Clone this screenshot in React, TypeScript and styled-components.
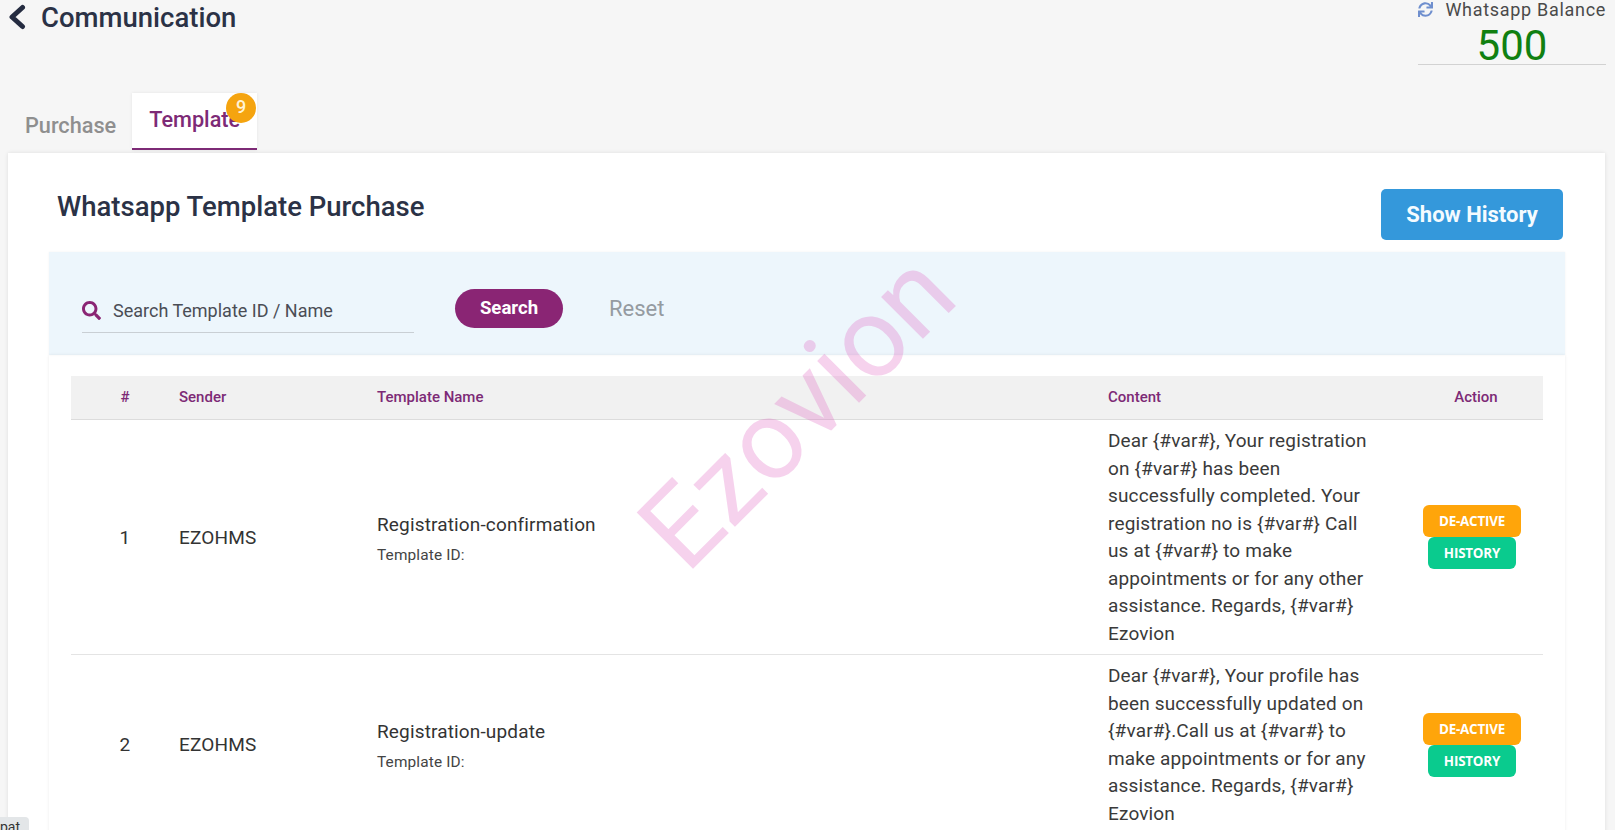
import styled, { createGlobalStyle } from "styled-components";
import { FaSearch, FaSync } from "react-icons/fa";

const GlobalStyle = createGlobalStyle`
  html, body {
    margin: 0;
    height: 100%;
    overflow: hidden;
    background: #f6f6f6;
    font-family: Roboto, "Liberation Sans", sans-serif;
    color: #2f3136;
  }
`;

const Page = styled.div`
  position: relative;
  height: 830px;
  overflow: hidden;
`;

const TopBar = styled.header`
  display: flex;
  justify-content: space-between;
  align-items: flex-start;
  height: 93px;
`;

const BackTitle = styled.div`
  display: flex;
  align-items: center;
  gap: 15px;
  padding: 1px 0 0 8px;
  height: 32px;
  color: #252c41;
  svg {
    width: 18px;
    height: 26px;
  }
`;

const PageTitle = styled.h1`
  margin: 0;
  font-size: 27.5px;
  font-weight: 500;
  color: #2b3246;
`;

const Balance = styled.div`
  width: 188px;
  margin-right: 9px;
  height: 64px;
  border-bottom: 1px solid #d2d2d2;
  text-align: center;
`;

const BalanceLabel = styled.div`
  display: flex;
  align-items: center;
  justify-content: flex-end;
  gap: 12px;
  height: 19px;
  font-size: 18px;
  letter-spacing: 0.7px;
  color: #4a4a4a;
  svg {
    width: 15px;
    height: 15px;
    color: #6f8fce;
  }
`;

const BalanceValue = styled.div`
  padding-top: 4px;
  font-size: 42px;
  line-height: 46px;
  color: #118011;
`;

const Tabs = styled.nav`
  display: flex;
  height: 57px;
  padding-left: 9px;
`;

const Tab = styled.div<{ $active?: boolean }>`
  position: relative;
  box-sizing: border-box;
  padding: ${({ $active }) => ($active ? "14px 17px 0" : "20px 16px 0")};
  font-size: 21.7px;
  line-height: 26px;
  font-weight: 500;
  color: ${({ $active }) => ($active ? "#7d2a76" : "#8f8f8f")};
  background: ${({ $active }) => ($active ? "#fff" : "transparent")};
  border-bottom: ${({ $active }) => ($active ? "2px solid #7d2a76" : "none")};
  box-shadow: ${({ $active }) => ($active ? "0 0 3px rgba(0, 0, 0, 0.08)" : "none")};
`;

const TabBadge = styled.span`
  position: absolute;
  top: 0;
  right: 1px;
  width: 30px;
  height: 30px;
  border-radius: 50%;
  background: #f5a40f;
  color: #fff3d6;
  font-size: 18px;
  font-weight: 500;
  line-height: 28px;
  text-align: center;
`;

const Card = styled.main`
  margin: 3px 10px 0 8px;
  padding: 36px 40px 0 41px;
  height: 700px;
  background: #fff;
  box-shadow: 0 0 4px rgba(0, 0, 0, 0.1);
`;

const CardHead = styled.div`
  display: flex;
  justify-content: space-between;
  align-items: flex-start;
  height: 63px;
  padding-right: 2px;
`;

const CardTitle = styled.h2`
  margin: 0;
  padding: 1px 0 0 8px;
  font-size: 27.5px;
  line-height: 34px;
  font-weight: 500;
  color: #2b3246;
`;

const HistoryButton = styled.button`
  width: 182px;
  height: 51px;
  border: 0;
  border-radius: 5px;
  background: #3498db;
  color: #f4fbff;
  font: 700 22px Roboto, sans-serif;
`;

const SearchPanel = styled.section`
  display: flex;
  align-items: flex-start;
  box-sizing: border-box;
  height: 103px;
  padding: 37px 0 0 33px;
  background: #edf6fc;
  box-shadow: 0 0 2px rgba(0, 0, 0, 0.06);
`;

const SearchField = styled.div`
  display: flex;
  align-items: center;
  gap: 12px;
  width: 332px;
  height: 43px;
  border-bottom: 1px solid #c9cfd4;
  color: #8a2574;
  svg {
    width: 19px;
    height: 19px;
  }
`;

const SearchText = styled.span`
  font-size: 18px;
  color: #4a4d55;
`;

const SearchButton = styled.button`
  width: 108px;
  height: 39px;
  margin-left: 41px;
  padding-bottom: 3px;
  border: 0;
  border-radius: 20px;
  background: #8a2574;
  color: #fff;
  font: 700 18.6px Roboto, sans-serif;
`;

const ResetLink = styled.span`
  margin-left: 46px;
  font-size: 22px;
  line-height: 40px;
  color: #959ba1;
`;

const TablePanel = styled.section`
  padding: 21px 22px 0;
  box-shadow: 0 0 3px rgba(0, 0, 0, 0.08);
  height: 500px;
`;

const DataTable = styled.table`
  width: 1472px;
  table-layout: fixed;
  border-collapse: collapse;
`;

const HeadCell = styled.th<{ $center?: boolean; $width: number }>`
  width: ${({ $width }) => $width}px;
  height: 41px;
  padding: 0 0 2px;
  background: #f1f1f1;
  border-bottom: 1px solid #dcdcdc;
  font-size: 15px;
  font-weight: 500;
  color: #7d2a76;
  text-align: ${({ $center }) => ($center ? "center" : "left")};
`;

const Row = styled.tr`
  border-bottom: 1px solid #e4e4e4;
`;

const Cell = styled.td<{ $center?: boolean }>`
  padding: 7px 0;
  font-size: 19px;
  letter-spacing: 0.15px;
  color: #333;
  vertical-align: middle;
  text-align: ${({ $center }) => ($center ? "center" : "left")};
`;

const TemplateName = styled.div`
  margin-bottom: 8px;
  line-height: 27px;
`;

const TemplateId = styled.div`
  font-size: 15.4px;
  color: #444;
`;

const ContentText = styled.div`
  width: 265px;
  line-height: 27.5px;
  color: #3a3a3a;
`;

const ActionStack = styled.div`
  display: flex;
  flex-direction: column;
  align-items: center;
  padding-right: 8px;
`;

const ActionButton = styled.button<{ $color: string; $width: number }>`
  width: ${({ $width }) => $width}px;
  height: 32px;
  border: 0;
  border-radius: 6px;
  background: ${({ $color }) => $color};
  color: #fff;
  font: 700 13.4px "Open Sans", sans-serif;
  letter-spacing: -0.2px;
`;

const Watermark = styled.div`
  position: absolute;
  left: 797px;
  top: 411px;
  transform: translate(-50%, -50%) rotate(-45deg);
  font-size: 112px;
  font-weight: 400;
  line-height: 1;
  color: #e060c0;
  opacity: 0.28;
  pointer-events: none;
  white-space: nowrap;
`;

const CornerTip = styled.div`
  position: absolute;
  left: 0;
  bottom: 0;
  width: 29px;
  height: 13px;
  overflow: hidden;
  border-radius: 0 4px 0 0;
  background: #e3e6e8;
  font-size: 14px;
  line-height: 20px;
  color: #333;
`;

const rows = [
  {
    id: 1,
    name: "Registration-confirmation",
    content:
      "Dear {#var#}, Your registration on {#var#} has been successfully completed. Your registration no is {#var#} Call us at {#var#} to make appointments or for any other assistance. Regards, {#var#} Ezovion",
  },
  {
    id: 2,
    name: "Registration-update",
    content:
      "Dear {#var#}, Your profile has been successfully updated on {#var#}.Call us at {#var#} to make appointments or for any assistance. Regards, {#var#} Ezovion",
  },
];

export default function App() {
  return (
    <Page>
      <GlobalStyle />
      <TopBar>
        <BackTitle>
          <svg viewBox="0 0 18 26" fill="none" stroke="currentColor" strokeWidth="5" strokeLinecap="round" strokeLinejoin="round">
            <polyline points="14.5,3.5 4,13 14.5,22.5" />
          </svg>
          <PageTitle>Communication</PageTitle>
        </BackTitle>
        <Balance>
          <BalanceLabel>
            <FaSync />
            Whatsapp Balance
          </BalanceLabel>
          <BalanceValue>500</BalanceValue>
        </Balance>
      </TopBar>
      <Tabs>
        <Tab>Purchase</Tab>
        <Tab $active>
          Template
          <TabBadge>9</TabBadge>
        </Tab>
      </Tabs>
      <Card>
        <CardHead>
          <CardTitle>Whatsapp Template Purchase</CardTitle>
          <HistoryButton>Show History</HistoryButton>
        </CardHead>
        <SearchPanel>
          <SearchField>
            <FaSearch />
            <SearchText>Search Template ID / Name</SearchText>
          </SearchField>
          <SearchButton>Search</SearchButton>
          <ResetLink>Reset</ResetLink>
        </SearchPanel>
        <TablePanel>
          <DataTable>
            <thead>
              <tr>
                <HeadCell $center $width={108}>#</HeadCell>
                <HeadCell $width={198}>Sender</HeadCell>
                <HeadCell $width={731}>Template Name</HeadCell>
                <HeadCell $width={301}>Content</HeadCell>
                <HeadCell $center $width={134}>Action</HeadCell>
              </tr>
            </thead>
            <tbody>
              {rows.map((row) => (
                <Row key={row.id}>
                  <Cell $center>{row.id}</Cell>
                  <Cell>EZOHMS</Cell>
                  <Cell>
                    <TemplateName>{row.name}</TemplateName>
                    <TemplateId>Template ID:</TemplateId>
                  </Cell>
                  <Cell>
                    <ContentText>{row.content}</ContentText>
                  </Cell>
                  <Cell>
                    <ActionStack>
                      <ActionButton $color="#ffa50a" $width={98}>DE-ACTIVE</ActionButton>
                      <ActionButton $color="#0acb8e" $width={88}>HISTORY</ActionButton>
                    </ActionStack>
                  </Cell>
                </Row>
              ))}
            </tbody>
          </DataTable>
        </TablePanel>
      </Card>
      <Watermark>Ezovion</Watermark>
      <CornerTip>pat</CornerTip>
    </Page>
  );
}
